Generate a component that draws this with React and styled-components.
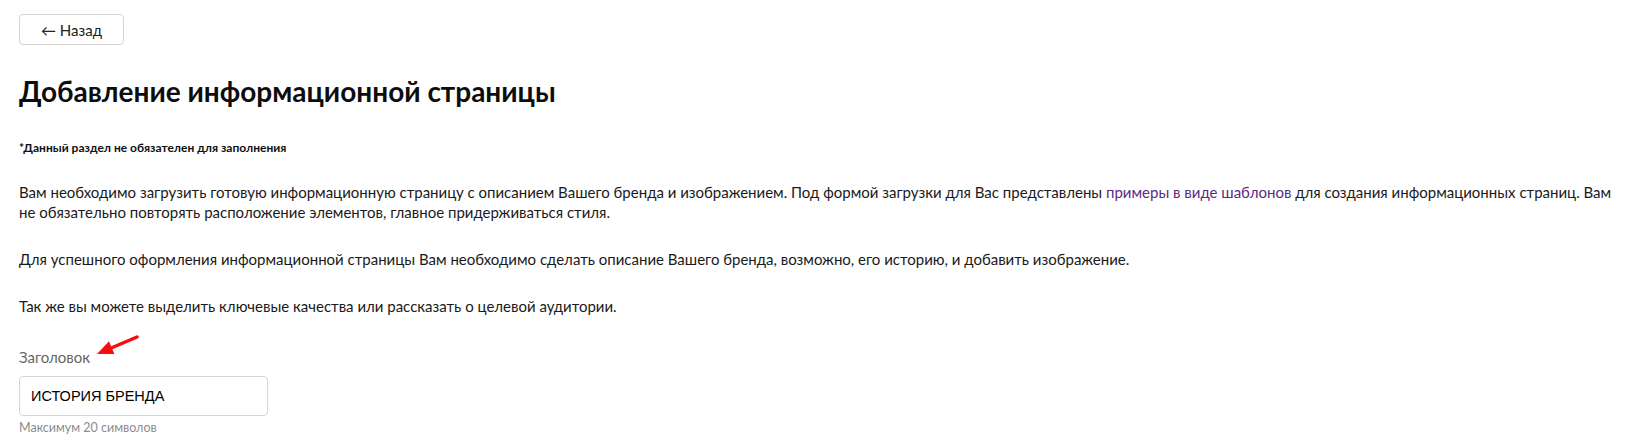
import React from 'react';
import styled, { createGlobalStyle } from 'styled-components';

const GlobalStyle = createGlobalStyle`
    body {
        margin: 0;
        background: #fff;
        font-family: Lato, "Noto Sans", sans-serif;
        color: #111;
    }
`;

const Page = styled.div`
    padding: 14px 19px 0;
`;

const BackButton = styled.button`
    display: flex;
    align-items: center;
    justify-content: center;
    width: 105px;
    height: 31px;
    padding: 0;
    background: #fff;
    border: 1px solid #d4d4d4;
    border-radius: 4px;
    font-family: Lato, sans-serif;
    font-size: 15px;
    color: #222;
    cursor: pointer;
`;

const Title = styled.h1`
    margin: 29px 0 0;
    font-size: 28px;
    font-weight: 700;
    line-height: 34px;
    color: #0d0d0d;
`;

const Note = styled.p`
    margin: 32px 0 0;
    font-size: 12px;
    font-weight: 700;
    line-height: 16px;
    color: #111;
`;

const Text = styled.p`
    margin: ${({ first }) => (first ? '26px' : '27px')} 0 0;
    max-width: 1610px;
    font-size: 15px;
    line-height: 20px;
    color: #1a1a1a;
`;

const Link = styled.a`
    color: #5a2a84;
    text-decoration: none;
`;

const Field = styled.div`
    margin-top: 31px;
`;

const LabelRow = styled.div`
    position: relative;
    display: inline-block;
`;

const Label = styled.label`
    display: block;
    font-size: 15px;
    line-height: 20px;
    color: #666;
`;

const Pointer = styled.svg`
    position: absolute;
    left: 77px;
    top: -12px;
`;

const Input = styled.input`
    display: block;
    box-sizing: border-box;
    width: 249px;
    height: 40px;
    margin: 9px 0 0;
    padding: 0 11px;
    border: 1px solid #d6d6d6;
    border-radius: 4px;
    font-family: "Liberation Sans", Arial, sans-serif;
    font-size: 14.5px;
    color: #000;
    outline: none;
`;

const Hint = styled.div`
    margin: 5px 0 0;
    font-size: 12.5px;
    line-height: 14px;
    color: #8c8c8c;
`;

export default function App() {
    return (
        <>
            <GlobalStyle />
            <Page>
                <BackButton>← Назад</BackButton>
                <Title>Добавление информационной страницы</Title>
                <Note>*Данный раздел не обязателен для заполнения</Note>
                <Text first>
                    Вам необходимо загрузить готовую информационную страницу с описанием Вашего бренда и изображением. Под формой загрузки для Вас представлены{' '}
                    <Link href="#">примеры в виде шаблонов</Link> для создания информационных страниц. Вам не обязательно повторять расположение элементов, главное придерживаться стиля.
                </Text>
                <Text>
                    Для успешного оформления информационной страницы Вам необходимо сделать описание Вашего бренда, возможно, его историю, и добавить изображение.
                </Text>
                <Text>
                    Так же вы можете выделить ключевые качества или рассказать о целевой аудитории.
                </Text>
                <Field>
                    <LabelRow>
                        <Label>Заголовок</Label>
                        <Pointer width="44" height="22" viewBox="0 0 44 22">
                            <path d="M41 2 L14 13.5" stroke="#f40f0f" strokeWidth="3.5" strokeLinecap="round" />
                            <path d="M1 19 L13 6.3 L18.4 19.1 Z" fill="#f40f0f" />
                        </Pointer>
                    </LabelRow>
                    <Input defaultValue="ИСТОРИЯ БРЕНДА" />
                    <Hint>Максимум 20 символов</Hint>
                </Field>
            </Page>
        </>
    );
}
